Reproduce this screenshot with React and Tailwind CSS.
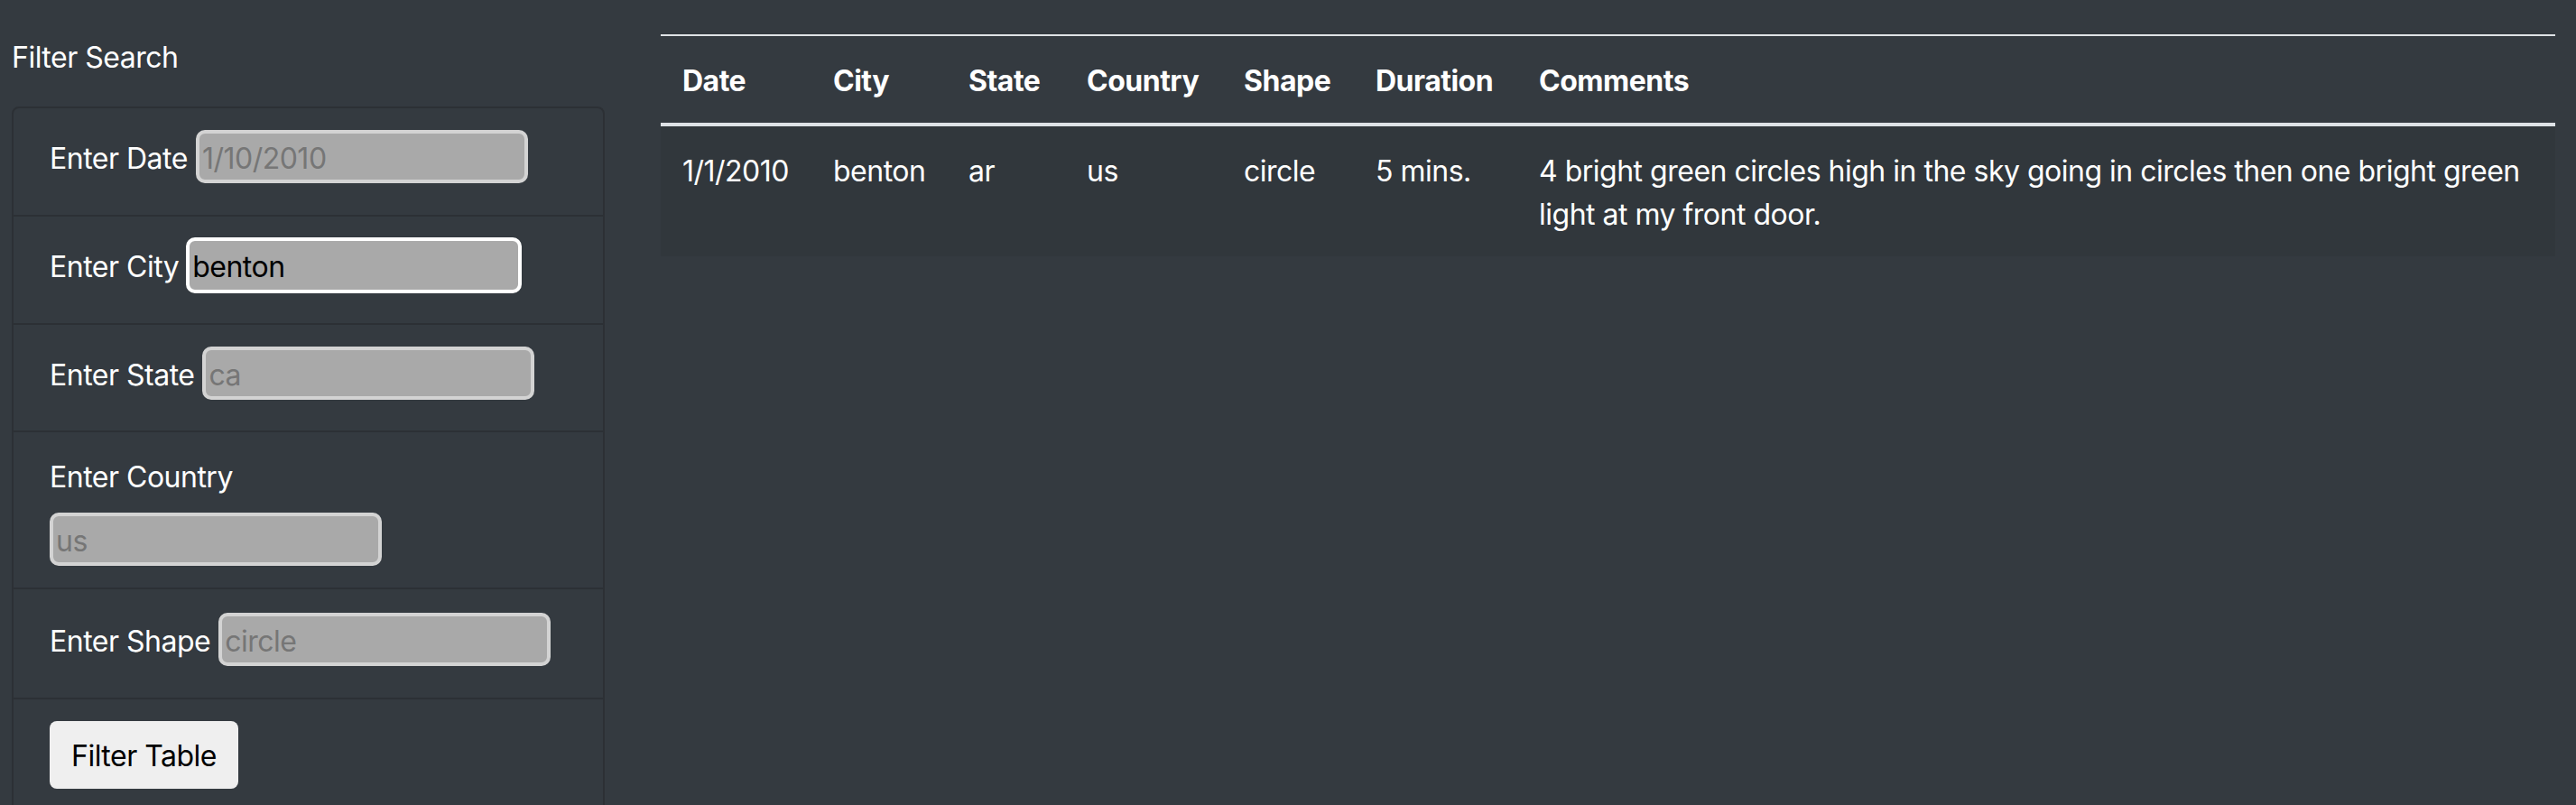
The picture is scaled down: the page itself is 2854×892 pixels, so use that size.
import { useState } from 'react';

const rows = [
  { date: '1/1/2010', city: 'benton', state: 'ar', country: 'us', shape: 'circle', duration: '5 mins.', comments: '4 bright green circles high in the sky going in circles then one bright green light at my front door.' },
];

const columns = [
  { key: 'date', name: 'Date', width: 'w-[167px]' },
  { key: 'city', name: 'City', width: 'w-[150px]' },
  { key: 'state', name: 'State', width: 'w-[131px]' },
  { key: 'country', name: 'Country', width: 'w-[174px]' },
  { key: 'shape', name: 'Shape', width: 'w-[146px]' },
  { key: 'duration', name: 'Duration', width: 'w-[181px]' },
  { key: 'comments', name: 'Comments', width: 'w-[1150px]' },
];

function FilterInput({ placeholder, value, focused, onChange }) {
  return (
    <input
      type="text"
      placeholder={placeholder}
      value={value}
      onChange={onChange}
      className={`rounded-[10px] border-4 bg-[#a9a9a9] px-[3px] pt-[3px] text-[32px] tracking-[-0.5px] text-black placeholder:text-[#767676] outline-none ${focused ? 'h-[62px] w-[372px] border-white' : 'h-[59px] w-[368px] border-[#d3d3d3]'}`}
    />
  );
}

export default function App() {
  const [city, setCity] = useState('benton');

  return (
    <div className="h-[892px] overflow-hidden bg-[#343a40] text-white flex font-['Inter',sans-serif] tracking-[-0.5px]">
      {/* Filters */}
      <aside className="w-[670px] pl-[13px] pt-[40px] shrink-0">
        <h5 className="text-[32px] leading-[48px] mb-[30px]">Filter Search</h5>
        <ul className="border-2 border-[#2c3035] rounded-lg text-[32px] leading-[48px]">
          <li className="flex items-center gap-[9px] px-[40px] pt-[24px] pb-[35px] border-b-2 border-[#2c3035]">
            <label className="pt-[4px]">Enter Date</label>
            <FilterInput placeholder="1/10/2010" />
          </li>
          <li className="flex items-center gap-[8px] px-[40px] pt-[23px] pb-[33px] border-b-2 border-[#2c3035]">
            <label className="pt-[4px]">Enter City</label>
            <FilterInput focused value={city} onChange={(e) => setCity(e.target.value)} />
          </li>
          <li className="flex items-center gap-[9px] px-[40px] pt-[24px] pb-[34px] border-b-2 border-[#2c3035]">
            <label className="pt-[4px]">Enter State</label>
            <FilterInput placeholder="ca" />
          </li>
          <li className="px-[40px] pt-[26px] pb-[24px] border-b-2 border-[#2c3035]">
            <label className="block mb-[15px]">Enter Country</label>
            <FilterInput placeholder="us" />
          </li>
          <li className="flex items-center gap-[9px] px-[40px] pt-[26px] pb-[35px] border-b-2 border-[#2c3035]">
            <label className="pt-[4px]">Enter Shape</label>
            <FilterInput placeholder="circle" />
          </li>
          <li className="px-[40px] pt-[24px] pb-[24px]">
            <button className="h-[75px] w-[209px] rounded-lg bg-[#efefef] pt-[3px] text-black text-[32px]">
              Filter Table
            </button>
          </li>
        </ul>
      </aside>

      {/* Results table */}
      <main className="ml-[62px] pt-[38px]">
        <table className="w-[2099px] table-fixed border-t-2 border-[#dee2e6] text-[32px] leading-[48px]">
          <thead>
            <tr className="border-b-4 border-[#dee2e6]">
              {columns.map((col) => (
                <th key={col.key} className={`${col.width} px-[24px] pt-[26px] pb-[22px] text-left font-bold`}>
                  {col.name}
                </th>
              ))}
            </tr>
          </thead>
          <tbody>
            {rows.map((row, i) => (
              <tr key={i} className="bg-[#31373c] align-top">
                {columns.map((col) => (
                  <td key={col.key} className="px-[24px] pt-[26px] pb-[22px]">{row[col.key]}</td>
                ))}
              </tr>
            ))}
          </tbody>
        </table>
      </main>
    </div>
  );
}
